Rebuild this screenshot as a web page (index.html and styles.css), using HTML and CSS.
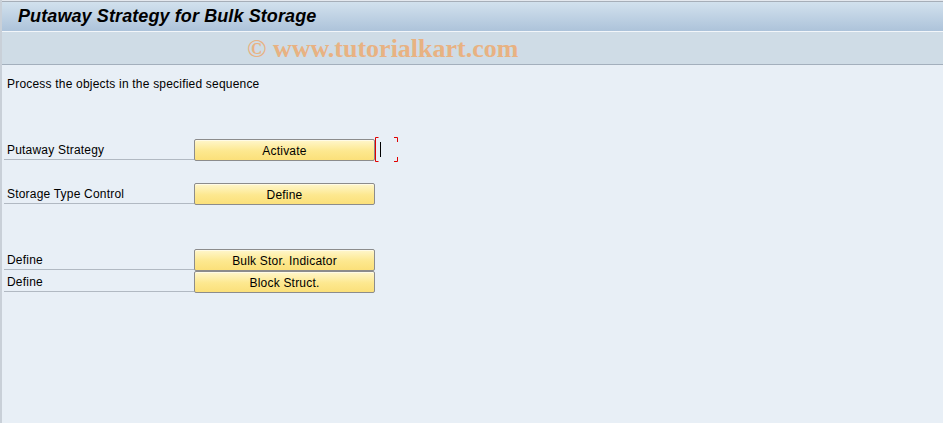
FILE: index.html
```html
<!DOCTYPE html>
<html>
<head>
<meta charset="utf-8">
<link rel="stylesheet" href="styles.css">
</head>
<body>
<div class="screen">
  <div class="titlebar"><h1 class="title">Putaway Strategy for Bulk Storage</h1></div>
  <div class="toolbar"><span class="watermark">© www.tutorialkart.com</span></div>
  <div class="content">
    <p class="intro">Process the objects in the specified sequence</p>
    <div class="group group-1">
      <div class="row">
        <span class="label">Putaway Strategy</span>
        <button class="btn">Activate</button>
        <svg class="focus" width="24" height="25" viewBox="0 0 24 25">
          <path d="M3.5 0.5 H0.5 V24.5 H3.5" fill="none" stroke="#e00000" stroke-width="1"/>
          <path d="M19 0.5 H22.5 V5 M22.5 20 V24.5 H19" fill="none" stroke="#e00000" stroke-width="1"/>
          <rect x="5" y="5" width="1" height="15" fill="#000"/>
        </svg>
      </div>
    </div>
    <div class="group group-2">
      <div class="row">
        <span class="label">Storage Type Control</span>
        <button class="btn">Define</button>
      </div>
    </div>
    <div class="group group-3">
      <div class="row">
        <span class="label">Define</span>
        <button class="btn">Bulk Stor. Indicator</button>
      </div>
      <div class="row">
        <span class="label">Define</span>
        <button class="btn">Block Struct.</button>
      </div>
    </div>
  </div>
</div>
</body>
</html>
```
FILE: styles.css
```css
html, body {
  margin: 0;
  padding: 0;
  height: 100%;
}
body {
  background: #e8eff6;
  font-family: "Liberation Sans", Arial, sans-serif;
  font-size: 12px;
  letter-spacing: 0.2px;
  color: #000;
}
.screen {
  height: 423px;
  border-left: 2px solid #c9d0d8;
  box-sizing: border-box;
  display: flex;
  flex-direction: column;
}
.titlebar {
  height: 30px;
  border-top: 1px solid #e4e8ee;
  border-bottom: 1px solid #f2f6fa;
  box-shadow: inset 0 1px 0 #a6aeb8;
  background: linear-gradient(#d3e2ee, #adc3da);
  display: flex;
  align-items: center;
  padding-left: 16px;
}
.title {
  margin: 0;
  font-size: 18px;
  font-weight: bold;
  font-style: italic;
  letter-spacing: 0.1px;
  color: #000;
}
.toolbar {
  height: 32px;
  background: #cfdce6;
  border-bottom: 1px solid #a3afbc;
  display: flex;
  align-items: center;
  padding-left: 245px;
}
.watermark {
  font-family: "Liberation Serif", "Times New Roman", serif;
  font-weight: bold;
  font-size: 26px;
  color: #e8b282;
  letter-spacing: 0;
  padding-top: 2px;
}
.content {
  padding: 12px 0 0 2px;
  display: flex;
  flex-direction: column;
}
.intro {
  margin: 0 0 0 3px;
  line-height: 15px;
}
.group {
  display: flex;
  flex-direction: column;
}
.group-1 { margin-top: 47px; }
.group-2 { margin-top: 22px; }
.group-3 { margin-top: 44px; }
.row {
  display: flex;
  align-items: flex-start;
  height: 22px;
}
.label {
  width: 187px;
  height: 20px;
  padding-left: 3px;
  line-height: 23px;
  border-bottom: 1px solid #b1b9c2;
  white-space: nowrap;
}
.btn {
  width: 181px;
  height: 22px;
  margin: 0;
  padding: 1px 0 0;
  border: 1px solid #8c8c8c;
  border-radius: 2px;
  background: linear-gradient(#fff7cc, #fde88f 55%, #fbe07a);
  box-shadow: inset 0 1px 0 #fffbe6;
  font-family: "Liberation Sans", Arial, sans-serif;
  font-size: 12px;
  letter-spacing: 0.2px;
  color: #000;
  text-align: center;
}
.focus {
  margin-top: -2px;
  display: block;
}
```
